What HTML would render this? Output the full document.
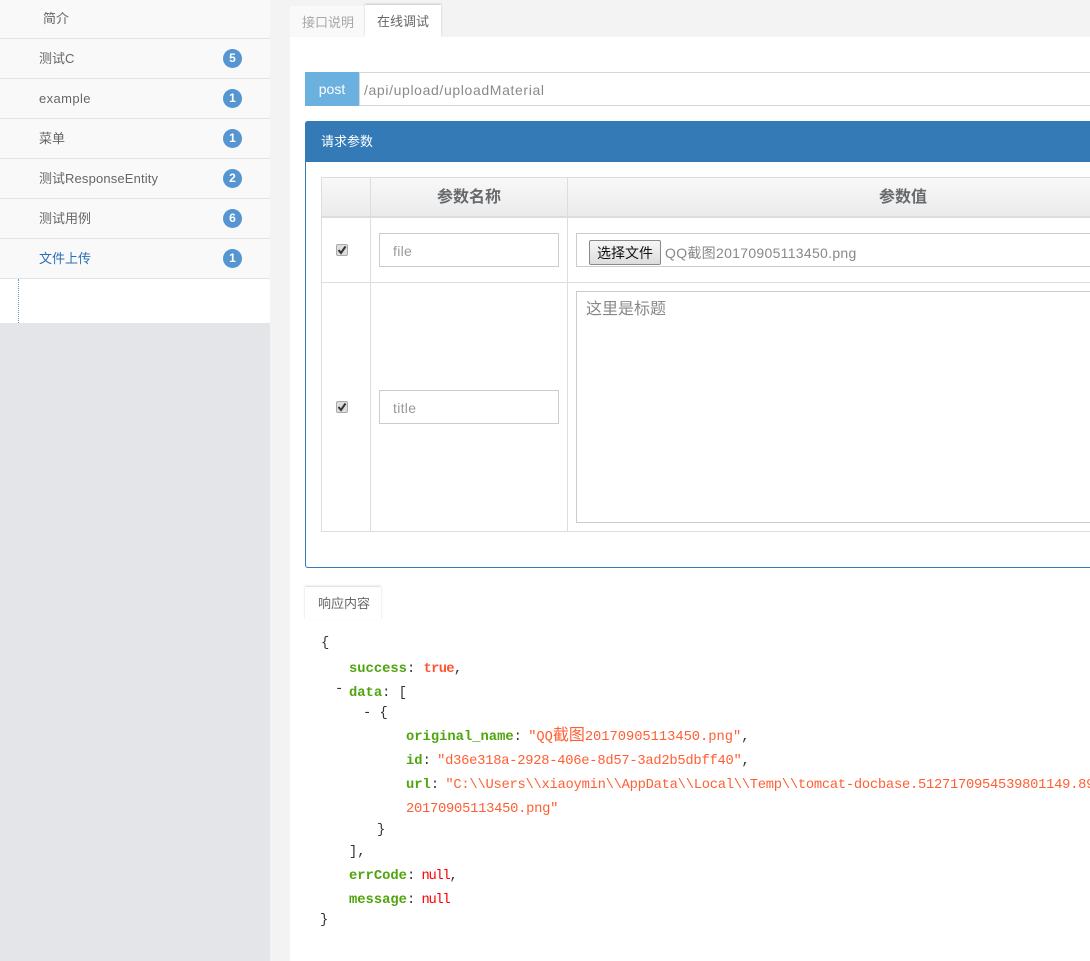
<!DOCTYPE html>
<html><head><meta charset="utf-8"><style>
*{box-sizing:border-box}
html,body{margin:0;padding:0;width:1090px;height:961px;overflow:hidden;background:#f3f3f4;font-family:"Liberation Sans","Noto Sans CJK SC",sans-serif;color:#676a6c}
.a{position:absolute}
.t{position:absolute;white-space:nowrap}
#side{left:0;top:0;width:270px;height:961px;background:#e4e5e9}
.it{position:absolute;left:0;width:270px;height:40px;background:#f9f9f9;border-bottom:1px solid #e3e3e3}
.it .t{left:39px;top:0;line-height:39px;font-size:13px;color:#666}
.bd{position:absolute;left:223px;top:10px;width:19px;height:19px;border-radius:50%;background:#5596d1;color:#fff;font-size:12px;font-weight:bold;line-height:19px;text-align:center}
.l{position:absolute;background:#ddd}
.inp{position:absolute;background:#fff;border:1px solid #ccc;font-size:14px;color:#999}
.m{position:absolute;white-space:pre;font-family:"Liberation Mono","Noto Sans CJK SC",monospace;font-size:13.8px;line-height:20px;color:#333}
.k{color:#4fa50e;font-weight:bold}.s{color:#ff5f33;letter-spacing:-.27px}.n{color:#f00;letter-spacing:-1.3px;margin-left:-2px}.b{color:#ff5533;font-weight:bold;letter-spacing:-.7px}
</style></head><body>
<div class="a" id="side">
<div class="it" style="top:-1px"><span class="t" style="left:43px">简介</span></div>
<div class="it" style="top:39px"><span class="t">测试C</span><span class="bd">5</span></div>
<div class="it" style="top:79px"><span class="t" style="letter-spacing:.4px">example</span><span class="bd">1</span></div>
<div class="it" style="top:119px"><span class="t">菜单</span><span class="bd">1</span></div>
<div class="it" style="top:159px"><span class="t">测试<span style="letter-spacing:.15px">ResponseEntity</span></span><span class="bd">2</span></div>
<div class="it" style="top:199px"><span class="t">测试用例</span><span class="bd">6</span></div>
<div class="it" style="top:239px"><span class="t" style="color:#2a6fb5">文件上传</span><span class="bd">1</span></div>
<div class="a" style="left:0;top:279px;width:270px;height:44px;background:#fff"></div>
<div class="a" style="left:18px;top:279px;height:44px;border-left:1px dotted #5b9bd5"></div>
</div>

<div class="a" style="left:290px;top:6px;width:75px;height:31px;background:#f9f9f9"></div>
<div class="t" style="left:302px;top:14px;font-size:13px;line-height:18px;color:#a7a7a7">接口说明</div>
<div class="a" style="left:365px;top:5px;width:76px;height:32px;background:#fff;box-shadow:0 -1px 2px rgba(0,0,0,.18)"></div>
<div class="t" style="left:377px;top:13px;font-size:13px;line-height:18px;color:#666">在线调试</div>
<div class="a" style="left:290px;top:37px;width:800px;height:924px;background:#fff"></div>

<div class="a" style="left:305px;top:72px;width:54px;height:34px;background:#6bb1e0;color:#fff;font-size:14px;line-height:35px;text-align:center">post</div>
<div class="a" style="left:359px;top:72px;width:731px;height:34px;border:1px solid #d6d6d6;border-right:0;background:#fff"></div>
<div class="t" style="left:364px;top:81px;font-size:14px;line-height:19px;color:#8a8a8a;letter-spacing:.63px">/api/upload/uploadMaterial</div>

<div class="a" style="left:305px;top:121px;width:785px;height:447px;border:1px solid #337ab7;border-right:0;border-top-left-radius:3px;border-bottom-left-radius:3px;background:#fff"></div>
<div class="a" style="left:305px;top:121px;width:785px;height:41px;background:#337ab7;border-top-left-radius:3px"></div>
<div class="t" style="left:321px;top:133px;font-size:13px;line-height:18px;color:#fff">请求参数</div>

<div class="a" style="left:322px;top:178px;width:768px;height:40px;background:linear-gradient(#f8f8f8,#ebebeb);border-bottom:2px solid #ddd"></div>
<div class="l" style="left:321px;top:177px;width:769px;height:1px"></div>
<div class="l" style="left:321px;top:282px;width:769px;height:1px"></div>
<div class="l" style="left:321px;top:531px;width:769px;height:1px"></div>
<div class="l" style="left:321px;top:177px;width:1px;height:355px"></div>
<div class="l" style="left:370px;top:177px;width:1px;height:355px"></div>
<div class="l" style="left:567px;top:177px;width:1px;height:355px"></div>
<div class="t" style="left:371px;width:196px;text-align:center;top:187px;font-size:16px;line-height:22px;font-weight:bold;color:#676a6c">参数名称</div>
<div class="t" style="left:718px;width:370px;text-align:center;top:187px;font-size:16px;line-height:22px;font-weight:bold;color:#676a6c">参数值</div>

<svg class="a" style="left:336px;top:244px" width="12" height="12" viewBox="0 0 12 12"><rect x=".5" y=".5" width="11" height="11" rx="1.5" fill="#ddd" stroke="#aaa"/><path d="M2.5 6l2.5 3 4.5-6.5" fill="none" stroke="#333" stroke-width="2"/></svg>
<svg class="a" style="left:336px;top:401px" width="12" height="12" viewBox="0 0 12 12"><rect x=".5" y=".5" width="11" height="11" rx="1.5" fill="#ddd" stroke="#aaa"/><path d="M2.5 6l2.5 3 4.5-6.5" fill="none" stroke="#333" stroke-width="2"/></svg>

<div class="inp" style="left:379px;top:233px;width:180px;height:34px;padding-left:13px;line-height:34px;letter-spacing:.3px">file</div>
<div class="inp" style="left:379px;top:390px;width:180px;height:34px;padding-left:13px;line-height:34px;letter-spacing:.3px">title</div>
<div class="inp" style="left:576px;top:233px;width:514px;height:34px;border-right:0"></div>
<div class="a" style="left:589px;top:240px;width:72px;height:25px;background:linear-gradient(#f6f6f6,#ddd);border:1px solid #8a8a8a;border-radius:2px;color:#111;font-size:14px;line-height:24px;text-align:center">选择文件</div>
<div class="t" style="left:665px;top:243px;font-size:14px;line-height:20px;color:#888;letter-spacing:.3px">QQ截图20170905113450.png</div>
<div class="inp" style="left:576px;top:291px;width:514px;height:232px;border-right:0;padding:8px 9px;font-size:16px;line-height:20px;color:#888">这里是标题</div>

<div class="a" style="left:305px;top:587px;width:76px;height:33px;background:#fff;box-shadow:0 -1px 2px rgba(0,0,0,.16)"></div>
<div class="t" style="left:318px;top:595px;font-size:13px;line-height:18px;color:#666">响应内容</div>

<div class="m" style="left:321px;top:634px">{</div>
<div class="m" style="left:349px;top:660px"><span class="k">success</span>: <span class="b">true</span>,</div>
<div class="m" style="left:335px;top:680px">-</div>
<div class="m" style="left:349px;top:684px"><span class="k">data</span>: [</div>
<div class="m" style="left:363px;top:704px">- {</div>
<div class="m" style="left:406px;top:726px"><span class="k">original_name</span>: <span class="s" style="margin-left:-2px;letter-spacing:-.05px">"QQ<span style="font-size:16px">截图</span>20170905113450.png"</span>,</div>
<div class="m" style="left:406px;top:752px"><span class="k">id</span>: <span class="s" style="margin-left:-2px">"d36e318a-2928-406e-8d57-3ad2b5dbff40"</span>,</div>
<div class="m" style="left:406px;top:776px;width:684px;overflow:hidden"><span class="k">url</span>: <span class="s" style="margin-left:-2px">"C:\\Users\\xiaoymin\\AppData\\Local\\Temp\\tomcat-docbase.5127170954539801149.89</span></div>
<div class="m" style="left:406px;top:800px"><span class="s">20170905113450.png"</span></div>
<div class="m" style="left:377px;top:821px">}</div>
<div class="m" style="left:349px;top:843px">],</div>
<div class="m" style="left:349px;top:867px"><span class="k">errCode</span>: <span class="n">null</span>,</div>
<div class="m" style="left:349px;top:891px"><span class="k">message</span>: <span class="n">null</span></div>
<div class="m" style="left:320px;top:911px">}</div>
</body></html>
